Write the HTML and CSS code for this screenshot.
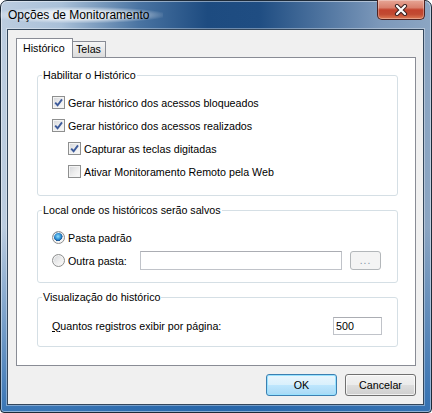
FILE: index.html
```html
<!DOCTYPE html>
<html lang="pt-BR">
<head>
  <meta charset="UTF-8">
  <title>Opções de Monitoramento</title>
  <link rel="stylesheet" href="styles.css">
</head>
<body>

<div class="window">
  <div class="titlebar">
    <span class="title">Opções de Monitoramento</span>
    <button class="close">
      <svg width="14" height="12" viewBox="0 0 14 12">
        <path d="M3 2 L11 10 M11 2 L3 10" stroke="#3b2222" stroke-width="4.2" stroke-linecap="round"/>
        <path d="M3 2 L11 10 M11 2 L3 10" stroke="#fff" stroke-width="2.2" stroke-linecap="round"/>
      </svg>
    </button>
  </div>

  <div class="client">
    <div class="tabs">
      <div class="tab active">Histórico</div>
      <div class="tab">Telas</div>
    </div>

    <div class="panel">
      <fieldset class="group group-first">
        <legend>Habilitar o Histórico</legend>
        <label class="row"><span class="check on"><svg viewBox="0 0 11 11"><path d="M2.2 5.6 L4.6 8.2 L9 2.4" /></svg></span>Gerar histórico dos acessos bloqueados</label>
        <label class="row"><span class="check on"><svg viewBox="0 0 11 11"><path d="M2.2 5.6 L4.6 8.2 L9 2.4" /></svg></span>Gerar histórico dos acessos realizados</label>
        <label class="row sub"><span class="check on"><svg viewBox="0 0 11 11"><path d="M2.2 5.6 L4.6 8.2 L9 2.4" /></svg></span>Capturar as teclas digitadas</label>
        <label class="row sub"><span class="check"></span>Ativar Monitoramento Remoto pela Web</label>
      </fieldset>

      <fieldset class="group group-second">
        <legend>Local onde os históricos serão salvos</legend>
        <label class="row"><span class="radio on"></span>Pasta padrão</label>
        <div class="row">
          <label class="radio-label"><span class="radio"></span>Outra pasta:</label>
          <input class="field path" type="text">
          <button class="browse">...</button>
        </div>
      </fieldset>

      <fieldset class="group group-third">
        <legend>Visualização do histórico</legend>
        <div class="row spread">
          <span><u>Q</u>uantos registros exibir por página:</span>
          <input class="field count" type="text" value="500">
        </div>
      </fieldset>
    </div>

    <div class="actions">
      <button class="btn default">OK</button>
      <button class="btn">Cancelar</button>
    </div>
  </div>
</div>

</body>
</html>
```

FILE: styles.css
```css
body {
  margin: 0;
  padding: 0;
  font-family: "Liberation Sans", Arial, sans-serif;
  font-size: 10.7px;
  color: #000;
  background-color: #fff;
}
.window {
  width: 432px;
  height: 413px;
  box-sizing: border-box;
  border: 1px solid #1d2a38;
  border-radius: 7px 7px 4px 4px;
  background:
    linear-gradient(to bottom, rgba(42, 107, 176, 0) 55%, rgba(42, 107, 176, 0.9) 100%),
    linear-gradient(90deg, #bccde0 0%, #a9c0d8 14%, #4a74a2 32%, #1d4b80 48%, #1f4d82 60%, #4c729e 74%, #7c98ba 88%, #8ca6c3 100%);
  box-shadow: inset 0 0 0 1px rgba(255, 255, 255, 0.45);
  display: flex;
  flex-direction: column;
}
.titlebar {
  height: 28px;
  display: flex;
  align-items: flex-start;
  padding-left: 7px;
}
.title {
  margin-top: 6px;
  font-size: 12px;
  line-height: 16px;
  color: #000;
  padding: 0 14px;
  margin-left: -14px;
  background: radial-gradient(ellipse at center, rgba(255, 255, 255, 0.75) 35%, rgba(255, 255, 255, 0) 75%);
}
.close {
  margin-left: auto;
  margin-right: 6px;
  margin-top: -1px;
  width: 48px;
  height: 20px;
  padding: 0;
  border: 1px solid #4f2321;
  border-top: none;
  border-radius: 0 0 5px 5px;
  background: linear-gradient(#e7a696 0%, #d9806d 40%, #c3432d 52%, #c14a32 75%, #dd7b55 100%);
  box-shadow: inset 0 0 0 1px rgba(255, 255, 255, 0.3);
  display: flex;
  align-items: center;
  justify-content: center;
}
.client {
  flex: 1;
  margin: 0 7px 7px 6px;
  border: 1px solid #34475c;
  box-shadow: 0 0 0 1px rgba(255, 255, 255, 0.35);
  background-color: #f0f0f0;
  padding: 8px 7px 8px 8px;
  display: flex;
  flex-direction: column;
}
.tabs {
  display: flex;
  align-items: flex-end;
}
.tab {
  border: 1px solid #898c95;
  border-bottom: none;
  height: 15px;
  line-height: 15px;
  padding: 0 4px 0 3px;
  border-left: none;
  background: linear-gradient(#f5f5f5, #e8e8e8 50%, #dcdcdc);
}
.tab.active {
  position: relative;
  z-index: 1;
  border-left: 1px solid #898c95;
  height: 19px;
  line-height: 19px;
  width: 44px;
  padding: 0 5px 0 6px;
  margin-bottom: -1px;
  background: #fff;
}
.panel {
  flex: 1;
  border: 1px solid #898c95;
  background-color: #fff;
  padding: 11px 17px 0 20px;
  display: flex;
  flex-direction: column;
  gap: 8px;
}
.group {
  margin: 0;
  border: 1px solid #d5dfe5;
  border-radius: 3px;
  padding: 9px 14px 12px 14px;
}
.group-second {
  padding-bottom: 10px;
}
.group-third {
  padding-top: 10px;
  padding-bottom: 9px;
}
.group legend {
  margin-left: -10px;
  padding: 0 1px;
  line-height: 13px;
}
.row {
  height: 23px;
  display: flex;
  align-items: center;
}
.row.sub {
  padding-left: 16px;
}
.row.spread {
  justify-content: space-between;
  padding-right: 1px;
}
.check {
  width: 11px;
  height: 11px;
  border: 1px solid #8e8f8f;
  margin-right: 3px;
  background: linear-gradient(135deg, #d3d5d9 0%, #eeeeee 55%, #fbfbfb 100%);
  box-shadow: inset 0 0 0 1px #f4f4f4;
}
.check svg {
  display: block;
  width: 11px;
  height: 11px;
}
.check path {
  fill: none;
  stroke: #3c5a9b;
  stroke-width: 1.9;
}
.radio-label {
  width: 88px;
  display: flex;
  align-items: center;
}
.radio {
  width: 11px;
  height: 11px;
  border: 1px solid #8e8f8f;
  border-radius: 50%;
  margin-right: 3px;
  background: linear-gradient(135deg, #cfd2d6 0%, #eeeeee 55%, #fdfdfd 100%);
  box-shadow: inset 0 0 0 1px #f4f4f4;
}
.radio.on {
  background:
    radial-gradient(circle at 45% 40%, #8fe0ff 0%, #2a8ad0 35%, #18508f 50%, rgba(0, 0, 0, 0) 53%),
    linear-gradient(135deg, #cfd2d6 0%, #eeeeee 55%, #fdfdfd 100%);
}
.field {
  box-sizing: border-box;
  margin: 0;
  border: 1px solid #c0c3c9;
  border-top-color: #abadb3;
  font-family: inherit;
  font-size: 10.7px;
  padding: 0 2px;
  background: #fff;
}
.path {
  width: 202px;
  height: 19px;
}
.count {
  width: 49px;
  height: 18px;
}
.browse {
  margin-left: 8px;
  width: 31px;
  height: 19px;
  padding: 0;
  border: 1px solid #b3b7ba;
  border-radius: 3px;
  background: #f4f4f4;
  color: #7c8ea3;
  font-family: inherit;
  font-size: 10px;
  letter-spacing: 1px;
}
.actions {
  margin-top: 8px;
  display: flex;
  justify-content: flex-end;
  gap: 8px;
}
.btn {
  width: 71px;
  height: 22px;
  padding: 0;
  border: 1px solid #707070;
  border-radius: 3px;
  font-family: inherit;
  font-size: 10.7px;
  color: #000;
  background: linear-gradient(#f2f2f2 0%, #ebebeb 50%, #dddddd 51%, #cfcfcf 100%);
  box-shadow: inset 0 0 0 1px rgba(255, 255, 255, 0.7);
}
.btn.default {
  border-color: #3c7fb1;
  background: linear-gradient(#eaf6fd 0%, #d9f0fc 50%, #bee6fd 51%, #a7d9f5 100%);
  box-shadow: inset 0 0 0 1px #98e2ff;
}
```
